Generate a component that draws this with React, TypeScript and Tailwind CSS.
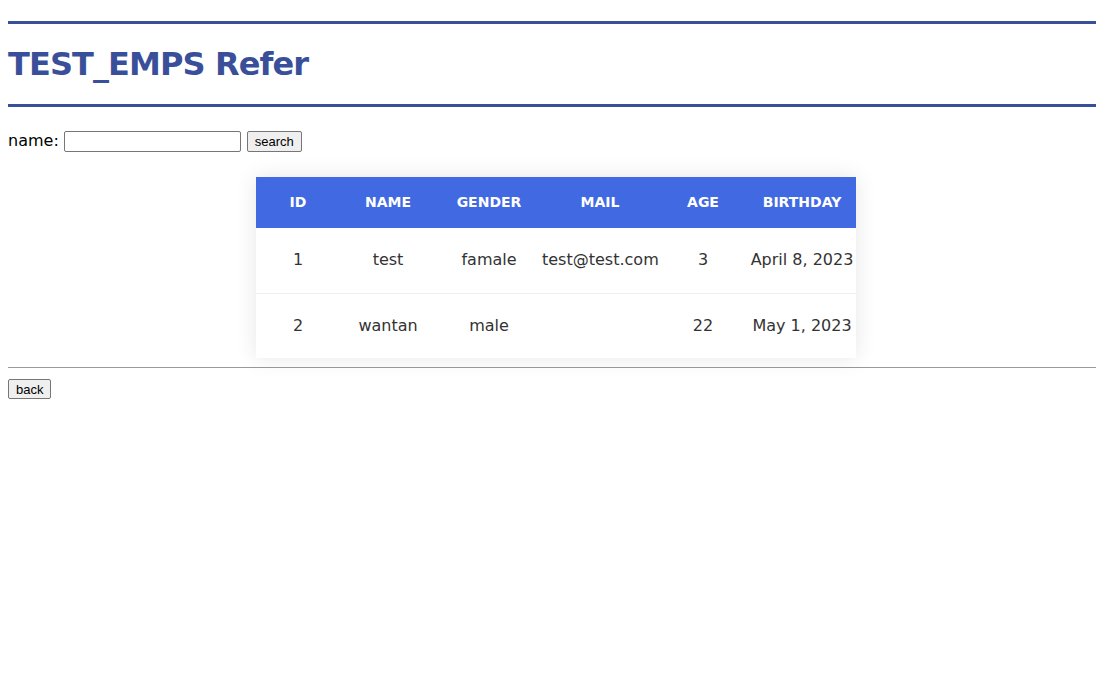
import React from "react";

type Emp = {
  id: number;
  name: string;
  gender: string;
  mail: string;
  age: number;
  birthday: string;
};

const emps: Emp[] = [
  { id: 1, name: "test", gender: "famale", mail: "test@test.com", age: 3, birthday: "April 8, 2023" },
  { id: 2, name: "wantan", gender: "male", mail: "", age: 22, birthday: "May 1, 2023" },
];

export default function App() {
  return (
    <div className="w-full overflow-hidden bg-white min-h-[696px]">
      <div className="w-[1112px] px-2 pb-2 text-black font-['Verdana','DejaVu_Sans',sans-serif]">
        <h1 className="mt-[21px] border-y-[3px] border-[#3a4f9a] py-[20px] text-[32px] leading-[40px] font-bold tracking-[-0.9px] text-[#3a4f9a]">
          TEST_EMPS Refer
        </h1>

        <form className="mt-[22px] flex items-center text-[16px]" onSubmit={(e) => e.preventDefault()}>
          <label className="mr-[5px]">name:</label>
          <input
            type="text"
            className="w-[177px] h-[21px] border border-[#767676] rounded-[2px] px-1 text-[13px]"
          />
          <button
            type="submit"
            className="ml-[6px] h-[21px] px-[7px] text-[13px] leading-none border border-[#767676] rounded-[2px] bg-[#efefef] font-['Liberation_Sans',sans-serif]"
          >
            search
          </button>
        </form>

        <div className="flex justify-center mt-[24px]">
          <table className="table-fixed w-[600px] border-collapse bg-white shadow-[0_0_20px_rgba(0,0,0,0.1)]">
            <thead>
              <tr className="bg-[#4169e1] text-white text-[14px] font-bold h-[51px]">
                <th className="w-[84px]">ID</th>
                <th className="w-[96px]">NAME</th>
                <th className="w-[106px]">GENDER</th>
                <th className="w-[116px]">MAIL</th>
                <th className="w-[90px]">AGE</th>
                <th className="w-[108px]">BIRTHDAY</th>
              </tr>
            </thead>
            <tbody>
              {emps.map((emp, i) => (
                <tr
                  key={emp.id}
                  className={`h-[65px] text-center text-[16px] text-[#333] ${i === 0 ? "border-b border-[#eee]" : ""}`}
                >
                  <td>{emp.id}</td>
                  <td>{emp.name}</td>
                  <td>{emp.gender}</td>
                  <td className="whitespace-nowrap">{emp.mail}</td>
                  <td>{emp.age}</td>
                  <td className="whitespace-nowrap">{emp.birthday}</td>
                </tr>
              ))}
            </tbody>
          </table>
        </div>

        <hr className="mt-[9px] border-t border-[#999]" />

        <button className="mt-[11px] h-[20px] px-[7px] text-[13px] leading-none border border-[#767676] rounded-[2px] bg-[#efefef] font-['Liberation_Sans',sans-serif]">
          back
        </button>
      </div>
    </div>
  );
}
